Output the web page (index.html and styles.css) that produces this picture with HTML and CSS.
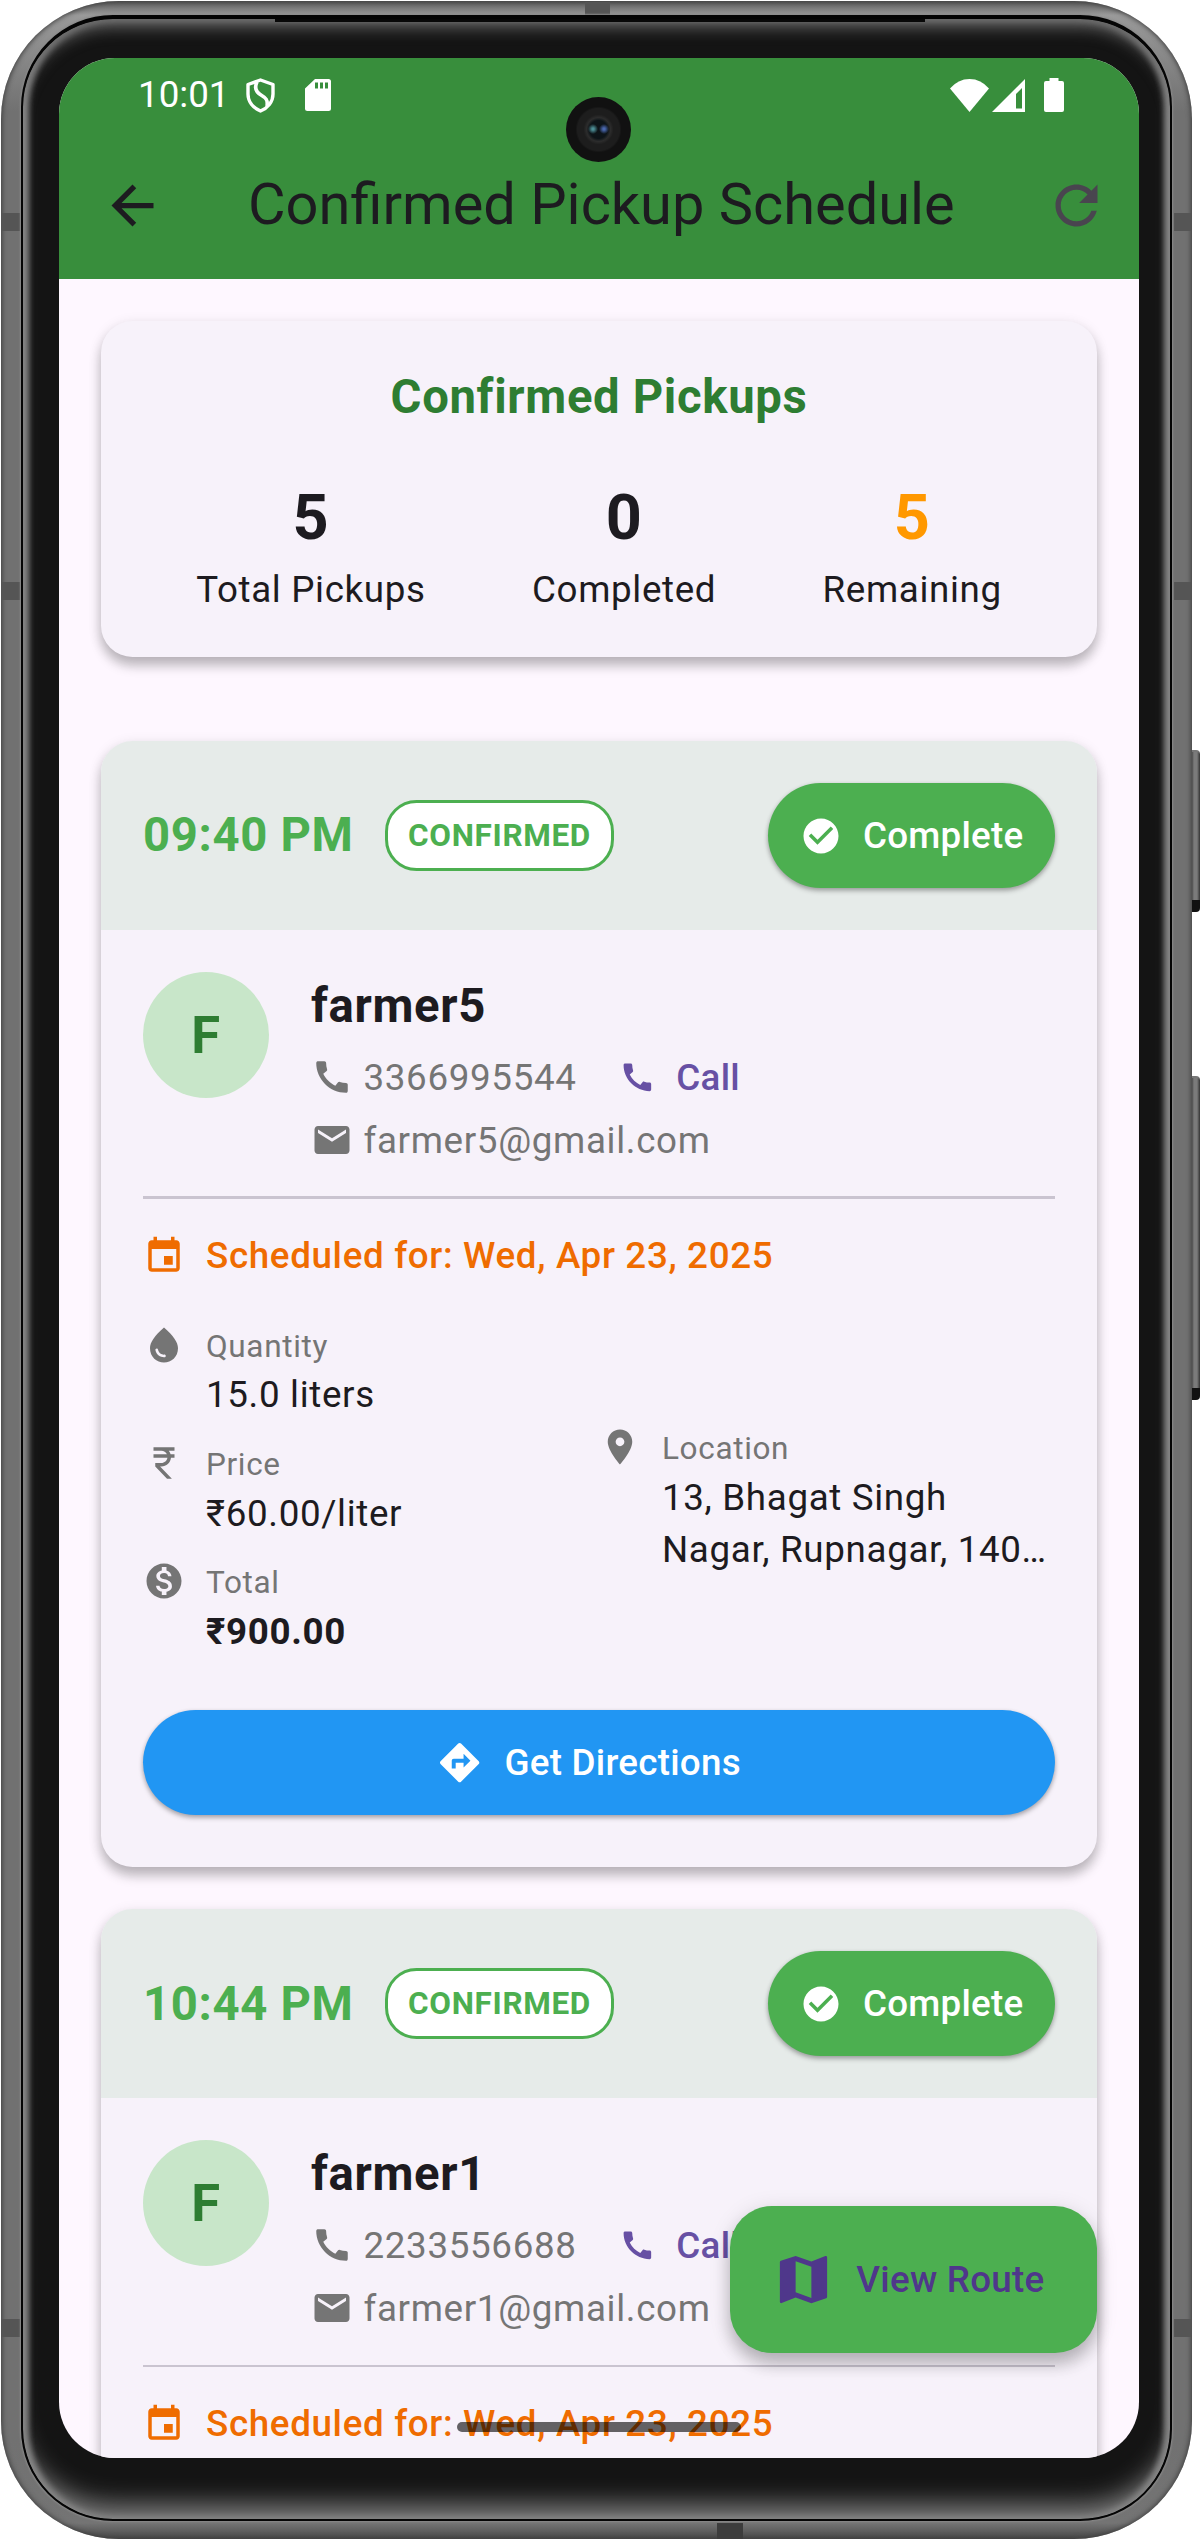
FILE: index.html
```html
<!DOCTYPE html>
<html lang="en">
<head>
<meta charset="utf-8">
<title>Confirmed Pickup Schedule</title>
<link rel="stylesheet" href="styles.css">
</head>
<body>
<svg class="sprite" xmlns="http://www.w3.org/2000/svg">
  <symbol id="i-back" viewBox="0 0 24 24"><path d="M20 11H7.83l5.59-5.59L12 4l-8 8 8 8 1.41-1.41L7.83 13H20v-2z"/></symbol>
  <symbol id="i-refresh" viewBox="0 0 24 24"><path d="M17.65 6.35C16.2 4.9 14.21 4 12 4c-4.42 0-7.99 3.58-7.99 8s3.57 8 7.99 8c3.73 0 6.84-2.55 7.73-6h-2.08c-.82 2.33-3.04 4-5.65 4-3.31 0-6-2.69-6-6s2.69-6 6-6c1.66 0 3.14.69 4.22 1.78L13 11h7V4l-2.35 2.35z"/></symbol>
  <symbol id="i-check" viewBox="0 0 24 24"><path d="M12 2C6.48 2 2 6.48 2 12s4.48 10 10 10 10-4.48 10-10S17.52 2 12 2zm-2 15l-5-5 1.41-1.41L10 14.17l7.59-7.59L19 8l-9 9z"/></symbol>
  <symbol id="i-phone" viewBox="0 0 24 24"><path d="M20.01 15.38c-1.23 0-2.42-.2-3.53-.56-.35-.12-.74-.03-1.01.24l-1.57 1.97c-2.83-1.35-5.48-3.9-6.89-6.83l1.95-1.66c.27-.28.35-.67.24-1.02-.37-1.11-.56-2.3-.56-3.53 0-.54-.45-.99-.99-.99H4.19C3.65 3 3 3.24 3 3.99 3 13.28 10.73 21 20.01 21c.71 0 .99-.63.99-1.18v-3.45c0-.54-.45-.99-.99-.99z"/></symbol>
  <symbol id="i-mail" viewBox="0 0 24 24"><path d="M20 4H4c-1.1 0-1.99.9-1.99 2L2 18c0 1.1.9 2 2 2h16c1.1 0 2-.9 2-2V6c0-1.1-.9-2-2-2zm0 4l-8 5-8-5V6l8 5 8-5v2z"/></symbol>
  <symbol id="i-event" viewBox="0 0 24 24"><path d="M17 12h-5v5h5v-5zM16 1v2H8V1H6v2H5c-1.11 0-1.99.9-1.99 2L3 19c0 1.1.89 2 2 2h14c1.1 0 2-.9 2-2V5c0-1.1-.9-2-2-2h-1V1h-2zm3 18H5V8h14v11z"/></symbol>
  <symbol id="i-drop" viewBox="0 0 24 24"><path d="M12 2c-5.33 4.55-8 8.48-8 11.8 0 4.98 3.8 8.2 8 8.2s8-3.22 8-8.2C20 10.48 17.33 6.55 12 2zM7.83 14c.37 0 .67.26.74.62.41 2.22 2.28 2.98 3.64 2.87.43-.02.79.32.79.75 0 .4-.32.73-.72.75-2.13.13-4.62-1.09-5.19-4.12C7.01 14.42 7.37 14 7.83 14z"/></symbol>
  <symbol id="i-rupee" viewBox="0 0 24 24"><path d="M13.66 7C13.1 5.82 11.9 5 10.5 5H6V3h12v2h-3.26c.48.58.84 1.26 1.05 2H18v2h-2.02c-.25 2.8-2.61 5-5.48 5h-.73l6.73 7h-2.77L7 14v-2h3.5c1.76 0 3.22-1.3 3.46-3H6V7h7.66z"/></symbol>
  <symbol id="i-coin" viewBox="0 0 24 24"><path d="M12 2C6.48 2 2 6.48 2 12s4.48 10 10 10 10-4.48 10-10S17.52 2 12 2zm1.41 16.09V20h-2.67v-1.93c-1.71-.36-3.16-1.46-3.27-3.4h1.96c.1 1.05.82 1.87 2.65 1.87 1.96 0 2.4-.98 2.4-1.59 0-.83-.44-1.61-2.67-2.14-2.48-.6-4.18-1.62-4.18-3.67 0-1.72 1.39-2.84 3.11-3.21V4h2.67v1.95c1.86.45 2.79 1.86 2.85 3.39H14.3c-.05-1.11-.64-1.87-2.22-1.87-1.5 0-2.4.68-2.4 1.64 0 .84.65 1.39 2.67 1.91s4.18 1.39 4.18 3.91c-.01 1.83-1.38 2.83-3.12 3.16z"/></symbol>
  <symbol id="i-place" viewBox="0 0 24 24"><path d="M12 2C8.13 2 5 5.13 5 9c0 5.25 7 13 7 13s7-7.75 7-13c0-3.87-3.13-7-7-7zm0 9.5c-1.38 0-2.5-1.12-2.5-2.5s1.12-2.5 2.5-2.5 2.5 1.12 2.5 2.5-1.12 2.5-2.5 2.5z"/></symbol>
  <symbol id="i-directions" viewBox="0 0 24 24"><path d="M21.71 11.29l-9-9c-.39-.39-1.02-.39-1.41 0l-9 9c-.39.39-.39 1.02 0 1.41l9 9c.39.39 1.02.39 1.41 0l9-9c.39-.38.39-1.01 0-1.41zM14 14.5V12h-4v3H8v-4c0-.55.45-1 1-1h5V7.5l3.5 3.5-3.5 3.5z"/></symbol>
  <symbol id="i-map" viewBox="0 0 24 24"><path d="M20.5 3l-.16.03L15 5.1 9 3 3.36 4.9c-.21.07-.36.25-.36.48V20.5c0 .28.22.5.5.5l.16-.03L9 18.9l6 2.1 5.64-1.9c.21-.07.36-.25.36-.48V3.5c0-.28-.22-.5-.5-.5zM15 19l-6-2.11V5l6 2.11V19z"/></symbol>
</svg>

<div class="phone">
  <div class="side-button power"></div>
  <div class="side-button volume"></div>
  <div class="frame">
    <i class="band band-l b1"></i><i class="band band-l b2"></i><i class="band band-l b3"></i>
    <i class="band band-r b1"></i><i class="band band-r b2"></i><i class="band band-r b3"></i>
    <i class="band band-t"></i><i class="band band-b"></i>
    <div class="glass">
      <div class="speaker"></div>
      <div class="screen">
        <div class="camera"></div>
        <header class="app-header">
          <div class="status-bar">
            <span class="clock">10:01</span>
            <svg class="st-shield" viewBox="0 0 29 35"><path d="M14.5 2 L27 6.5 V16 C27 24 21.5 30 14.5 33 C7.5 30 2 24 2 16 V6.500 Z" fill="none" stroke="#fff" stroke-width="3.400" stroke-linejoin="round"/><path d="M11 4 C8 10 10 14 15 17 C20 20 22 22 21 28" fill="none" stroke="#fff" stroke-width="3.600"/></svg>
            <svg class="st-sd" viewBox="0 0 26 32"><path fill="#fff" fill-rule="evenodd" d="M10 0H23.500Q26 0 26 2.500V29.500Q26 32 23.500 32H2.500Q0 32 0 29.500V9.500ZM10 3.500V9.500H13V3.500ZM15 3.500V9.500H18V3.500ZM20 3.500V9.500H23V3.500Z"/></svg>
            <span class="spacer"></span>
            <svg class="st-wifi" viewBox="0 0 39 33"><path fill="#fff" d="M19.500 33 L0 9.500 Q8 0 19.500 0 T39 9.500Z"/></svg>
            <svg class="st-signal" viewBox="0 0 33 33"><path fill="#fff" fill-rule="evenodd" d="M33 0V33H0ZM24 15V29.500H30V9Z"/></svg>
            <svg class="st-battery" viewBox="0 0 20 34"><path fill="#fff" d="M5.500 0H14.500V3H18Q20 3 20 5V32Q20 34 18 34H2Q0 34 0 32V5Q0 3 2 3H5.500Z"/></svg>
          </div>
          <div class="toolbar">
            <svg class="icon i24"><use href="#i-back"/></svg>
            <h1 class="title">Confirmed Pickup Schedule</h1>
            <svg class="icon i24 refresh"><use href="#i-refresh"/></svg>
          </div>
        </header>

        <main class="content">
          <section class="card summary">
            <h2 class="summary-title">Confirmed Pickups</h2>
            <div class="stats">
              <div class="stat"><b class="stat-value">5</b><span class="text">Total Pickups</span></div>
              <div class="stat"><b class="stat-value">0</b><span class="text">Completed</span></div>
              <div class="stat"><b class="stat-value remaining">5</b><span class="text">Remaining</span></div>
            </div>
          </section>

          <article class="card pickup">
            <div class="pickup-head">
              <b class="time">09:40 PM</b>
              <span class="badge">CONFIRMED</span>
              <button class="btn complete"><svg class="icon i16"><use href="#i-check"/></svg><span class="text">Complete</span></button>
            </div>
            <div class="pickup-body">
              <div class="farmer">
                <div class="avatar">F</div>
                <div class="farmer-info">
                  <b class="name">farmer5</b>
                  <div class="contact"><svg class="icon i16"><use href="#i-phone"/></svg><span class="text">3366995544</span><span class="call"><svg class="icon i14"><use href="#i-phone"/></svg><span class="text">Call</span></span></div>
                  <div class="contact"><svg class="icon i16"><use href="#i-mail"/></svg><span class="text">farmer5@gmail.com</span></div>
                </div>
              </div>
              <hr class="divider">
              <div class="scheduled"><svg class="icon i16"><use href="#i-event"/></svg><span class="text">Scheduled for: Wed, Apr 23, 2025</span></div>
              <div class="details">
                <div class="details-left">
                  <div class="detail"><svg class="icon i16"><use href="#i-drop"/></svg><div class="detail-text"><div class="label">Quantity</div><div class="value">15.0 liters</div></div></div>
                  <div class="detail"><svg class="icon i16"><use href="#i-rupee"/></svg><div class="detail-text"><div class="label">Price</div><div class="value">₹60.00/liter</div></div></div>
                  <div class="detail"><svg class="icon i16"><use href="#i-coin"/></svg><div class="detail-text"><div class="label">Total</div><div class="value total">₹900.00</div></div></div>
                </div>
                <div class="details-right">
                  <div class="detail"><svg class="icon i16"><use href="#i-place"/></svg><div class="detail-text"><div class="label">Location</div><div class="value">13, Bhagat Singh<br>Nagar, Rupnagar, 140…</div></div></div>
                </div>
              </div>
              <button class="btn directions"><svg class="icon i18"><use href="#i-directions"/></svg><span class="text">Get Directions</span></button>
            </div>
          </article>

          <article class="card pickup">
            <div class="pickup-head">
              <b class="time">10:44 PM</b>
              <span class="badge">CONFIRMED</span>
              <button class="btn complete"><svg class="icon i16"><use href="#i-check"/></svg><span class="text">Complete</span></button>
            </div>
            <div class="pickup-body">
              <div class="farmer">
                <div class="avatar">F</div>
                <div class="farmer-info">
                  <b class="name">farmer1</b>
                  <div class="contact"><svg class="icon i16"><use href="#i-phone"/></svg><span class="text">2233556688</span><span class="call"><svg class="icon i14"><use href="#i-phone"/></svg><span class="text">Call</span></span></div>
                  <div class="contact"><svg class="icon i16"><use href="#i-mail"/></svg><span class="text">farmer1@gmail.com</span></div>
                </div>
              </div>
              <hr class="divider thin">
              <div class="scheduled"><svg class="icon i16"><use href="#i-event"/></svg><span class="text">Scheduled for: Wed, Apr 23, 2025</span></div>
            </div>
          </article>
        </main>

        <button class="fab"><svg class="icon i24"><use href="#i-map"/></svg><span class="text">View Route</span></button>
        <div class="nav-pill"></div>
      </div>
    </div>
  </div>
</div>
</body>
</html>
```

FILE: styles.css
```css
/* 1rem = one density-independent pixel on a 2.625x display */
html { font-size: 2.625px; }
* { box-sizing: border-box; }
body {
  margin: 0;
  background: #fff;
  font-family: Roboto, "Liberation Sans", sans-serif;
}
h1, h2 { margin: 0; }
button { border: 0; font-family: inherit; }
.sprite { position: absolute; width: 0; height: 0; }

/* ---------- device ---------- */
.phone {
  position: relative;
  width: 1200px;
  height: 2541px;
  padding: 1px 8px 1px 1px;
  overflow: hidden;
}
.frame {
  position: relative;
  width: 1191px;
  height: 2538px;
  padding: 14px 20px 18px;
  border-radius: 118px;
  background: linear-gradient(#5a5a5a, #9a9a9a 14px, #717171 110px, #717171 2440px, #747474 2522px, #484848);
  box-shadow: inset 0 0 5px 1px #3f3f3f;
}
.glass {
  position: relative;
  height: 2506px;
  padding: 39px 32px 61px 36px;
  border: 2px solid #050505;
  border-top-width: 4px;
  border-radius: 92px;
  background: #141414;
  box-shadow:
    inset 0 -26px 26px -12px #828282,
    inset 0 14px 16px -6px #666,
    inset 6px 0 6px -1px #8f8f8f,
    inset -6px 0 6px -1px #8f8f8f,
    inset 0 0 8px 1px #777,
    0 0 2px 1px #8b8b8b;
}
.speaker {
  position: absolute;
  top: 0;
  left: 252px;
  width: 650px;
  height: 3px;
  background: #080808;
}
.band { position: absolute; background: #555; }
.band-l { left: 1px; width: 18px; height: 18px; }
.band-r { right: 1px; width: 17px; height: 18px; }
.b1 { top: 212px; }
.b2 { top: 581px; }
.b3 { top: 2318px; }
.band-t { left: 584px; top: 1px; width: 25px; height: 13px; }
.band-b { left: 716px; bottom: 0; width: 26px; height: 16px; background: #3c3c3c; }
.side-button {
  position: absolute;
  right: 0;
  width: 9px;
  border-radius: 0 4px 4px 0;
  background: linear-gradient(90deg, #333, #7b7b7b 3px, #7b7b7b 6px, #333);
  border-top: 2px solid #777;
  border-bottom: 12px solid #111;
}
.power { top: 750px; height: 162px; }
.volume { top: 1076px; height: 324px; }

.screen {
  position: relative;
  display: flex;
  flex-direction: column;
  width: 1080px;
  height: 2400px;
  border-radius: 56px;
  background: #fef7ff;
  color: #1d1b20;
  font-size: 14rem;
  line-height: 20rem;
  letter-spacing: 0.25rem;
  overflow: hidden;
}
.camera {
  position: absolute;
  left: 507px;
  top: 39px;
  width: 65px;
  height: 65px;
  border-radius: 50%;
  background:
    radial-gradient(circle at 27px 32px, #4c8e96 0 1px, transparent 5px),
    radial-gradient(circle at 38px 32px, #4a68b0 0 1px, transparent 5px),
    radial-gradient(circle, #0d1418 0 9px, #2c2c2c 12px, #1d1d1d 15px 21px, #111 23px);
}

/* ---------- header ---------- */
.app-header { flex: none; height: 221px; background: #388e3c; }
.status-bar {
  display: flex;
  align-items: center;
  height: 74px;
  padding: 0 75px 0 79px;
  color: #fff;
}
.status-bar svg { flex: none; }
.clock { width: 108px; letter-spacing: 0; }
.st-shield { width: 29px; height: 35px; margin-right: 30px; }
.st-sd { width: 26px; height: 32px; }
.spacer { flex: 1; }
.st-wifi { width: 39px; height: 33px; margin-right: 3px; }
.st-signal { width: 33px; height: 33px; margin-right: 19px; }
.st-battery { width: 20px; height: 34px; }
.toolbar { display: flex; align-items: center; height: 56rem; padding: 0 12rem 0 16rem; }
.title { flex: 1; margin-left: 32rem; padding-bottom: 1px; font-size: 22rem; line-height: 28rem; font-weight: 400; letter-spacing: 0; white-space: nowrap; }
.refresh { color: #49454f; }

.icon { flex: none; display: block; fill: currentColor; }
.i14 { width: 14rem; height: 14rem; }
.i16 { width: 16rem; height: 16rem; }
.i18 { width: 18rem; height: 18rem; }
.i24 { width: 24rem; height: 24rem; }

/* text sits slightly below the centre of its line box */
.text { display: block; padding-top: 2px; line-height: calc(20rem - 2px); white-space: nowrap; }

/* ---------- content ---------- */
.content {
  flex: 1;
  min-height: 0;
  display: flex;
  flex-direction: column;
  gap: 16rem;
  padding: 16rem 16rem 0;
  overflow: hidden;
}
.card {
  flex: none;
  border-radius: 12rem;
  background: #f7f2fa;
  box-shadow: 0 9px 12px rgba(0, 0, 0, 0.22), 0 3px 14px rgba(0, 0, 0, 0.11);
}
.summary {
  display: flex;
  flex-direction: column;
  align-items: center;
  gap: 16rem;
  margin-bottom: 16rem;
  padding: 16rem;
}
.summary-title { color: #2e7d32; font-size: 18rem; line-height: 26rem; font-weight: 700; }
.stats { display: flex; justify-content: space-around; align-self: stretch; }
.stat { display: flex; flex-direction: column; align-items: center; }
.stat-value { font-size: 24rem; line-height: 34rem; }
.remaining { color: #ff9800; }

.pickup-head {
  display: flex;
  align-items: center;
  padding: 16rem;
  border-radius: 12rem 12rem 0 0;
  background: #e6ebe9;
}
.time { color: #4caf50; font-size: 18rem; line-height: 26rem; }
.badge {
  margin-left: 12rem;
  padding: 11px 20px 9px;
  border: 3px solid #4caf50;
  border-radius: 12rem;
  background: #fff;
  color: #4caf50;
  font-size: 12rem;
  line-height: 17rem;
  font-weight: 700;
}
.btn {
  display: flex;
  align-items: center;
  justify-content: center;
  gap: 8rem;
  height: 40rem;
  border-radius: 20rem;
  color: #fff;
  font-size: 14rem;
  font-weight: 500;
  letter-spacing: 0.1rem;
  box-shadow: 0 3px 5px rgba(0, 0, 0, 0.26), 0 1px 4px rgba(0, 0, 0, 0.12);
}
.complete { margin-left: auto; padding: 0 12rem; background: #4caf50; }
.directions { width: 100%; padding: 0 24rem 0 16rem; background: #2196f3; }

.pickup-body { padding: 16rem 16rem 20rem; }
.farmer { display: flex; gap: 16rem; }
.avatar {
  width: 48rem;
  height: 48rem;
  border-radius: 50%;
  background: #c8e6c9;
  color: #2e7d32;
  font-size: 20rem;
  font-weight: 700;
  line-height: 48rem;
  text-align: center;
}
.farmer-info { display: flex; flex-direction: column; gap: 4rem; }
.name { font-size: 18rem; line-height: 26rem; }
.contact { display: flex; align-items: center; gap: 4rem; color: #757575; }
.call {
  display: flex;
  align-items: center;
  gap: 8rem;
  margin-left: 12rem;
  color: #6750a4;
  font-weight: 500;
  letter-spacing: 0.1rem;
}
.divider { height: 3px; margin: 30px 0; border: 0; background: #cac4d0; }
.divider.thin { height: 2px; margin: 31px 0 30px; }
.scheduled { display: flex; align-items: center; gap: 8rem; color: #ef6c00; font-weight: 500; }
.details { display: flex; align-items: center; margin: 16rem 0 12rem; }
.details-left, .details-right { flex: 1; }
.details-left .detail { margin-bottom: 8rem; }
.detail { display: flex; align-items: flex-start; gap: 8rem; }
.detail-text { padding-top: 1px; margin-bottom: -1px; }
.detail .icon, .label { color: #757575; }
.label { font-size: 12rem; line-height: 17rem; }
.value { white-space: nowrap; }
.total { font-weight: 700; }

/* ---------- overlays ---------- */
.fab {
  position: absolute;
  right: 16rem;
  bottom: 40rem;
  display: flex;
  align-items: center;
  gap: 8rem;
  height: 56rem;
  padding: 0 20rem 0 16rem;
  border-radius: 16rem;
  background: #4caf50;
  color: #4f378b;
  font-size: 14rem;
  font-weight: 500;
  letter-spacing: 0.1rem;
  box-shadow: 0 12px 16px rgba(0, 0, 0, 0.2), 0 4px 22px rgba(0, 0, 0, 0.13);
}
.nav-pill {
  position: absolute;
  left: 398px;
  bottom: 26px;
  width: 284px;
  height: 10px;
  border-radius: 5px;
  background: rgba(0, 0, 0, 0.6);
}
```
